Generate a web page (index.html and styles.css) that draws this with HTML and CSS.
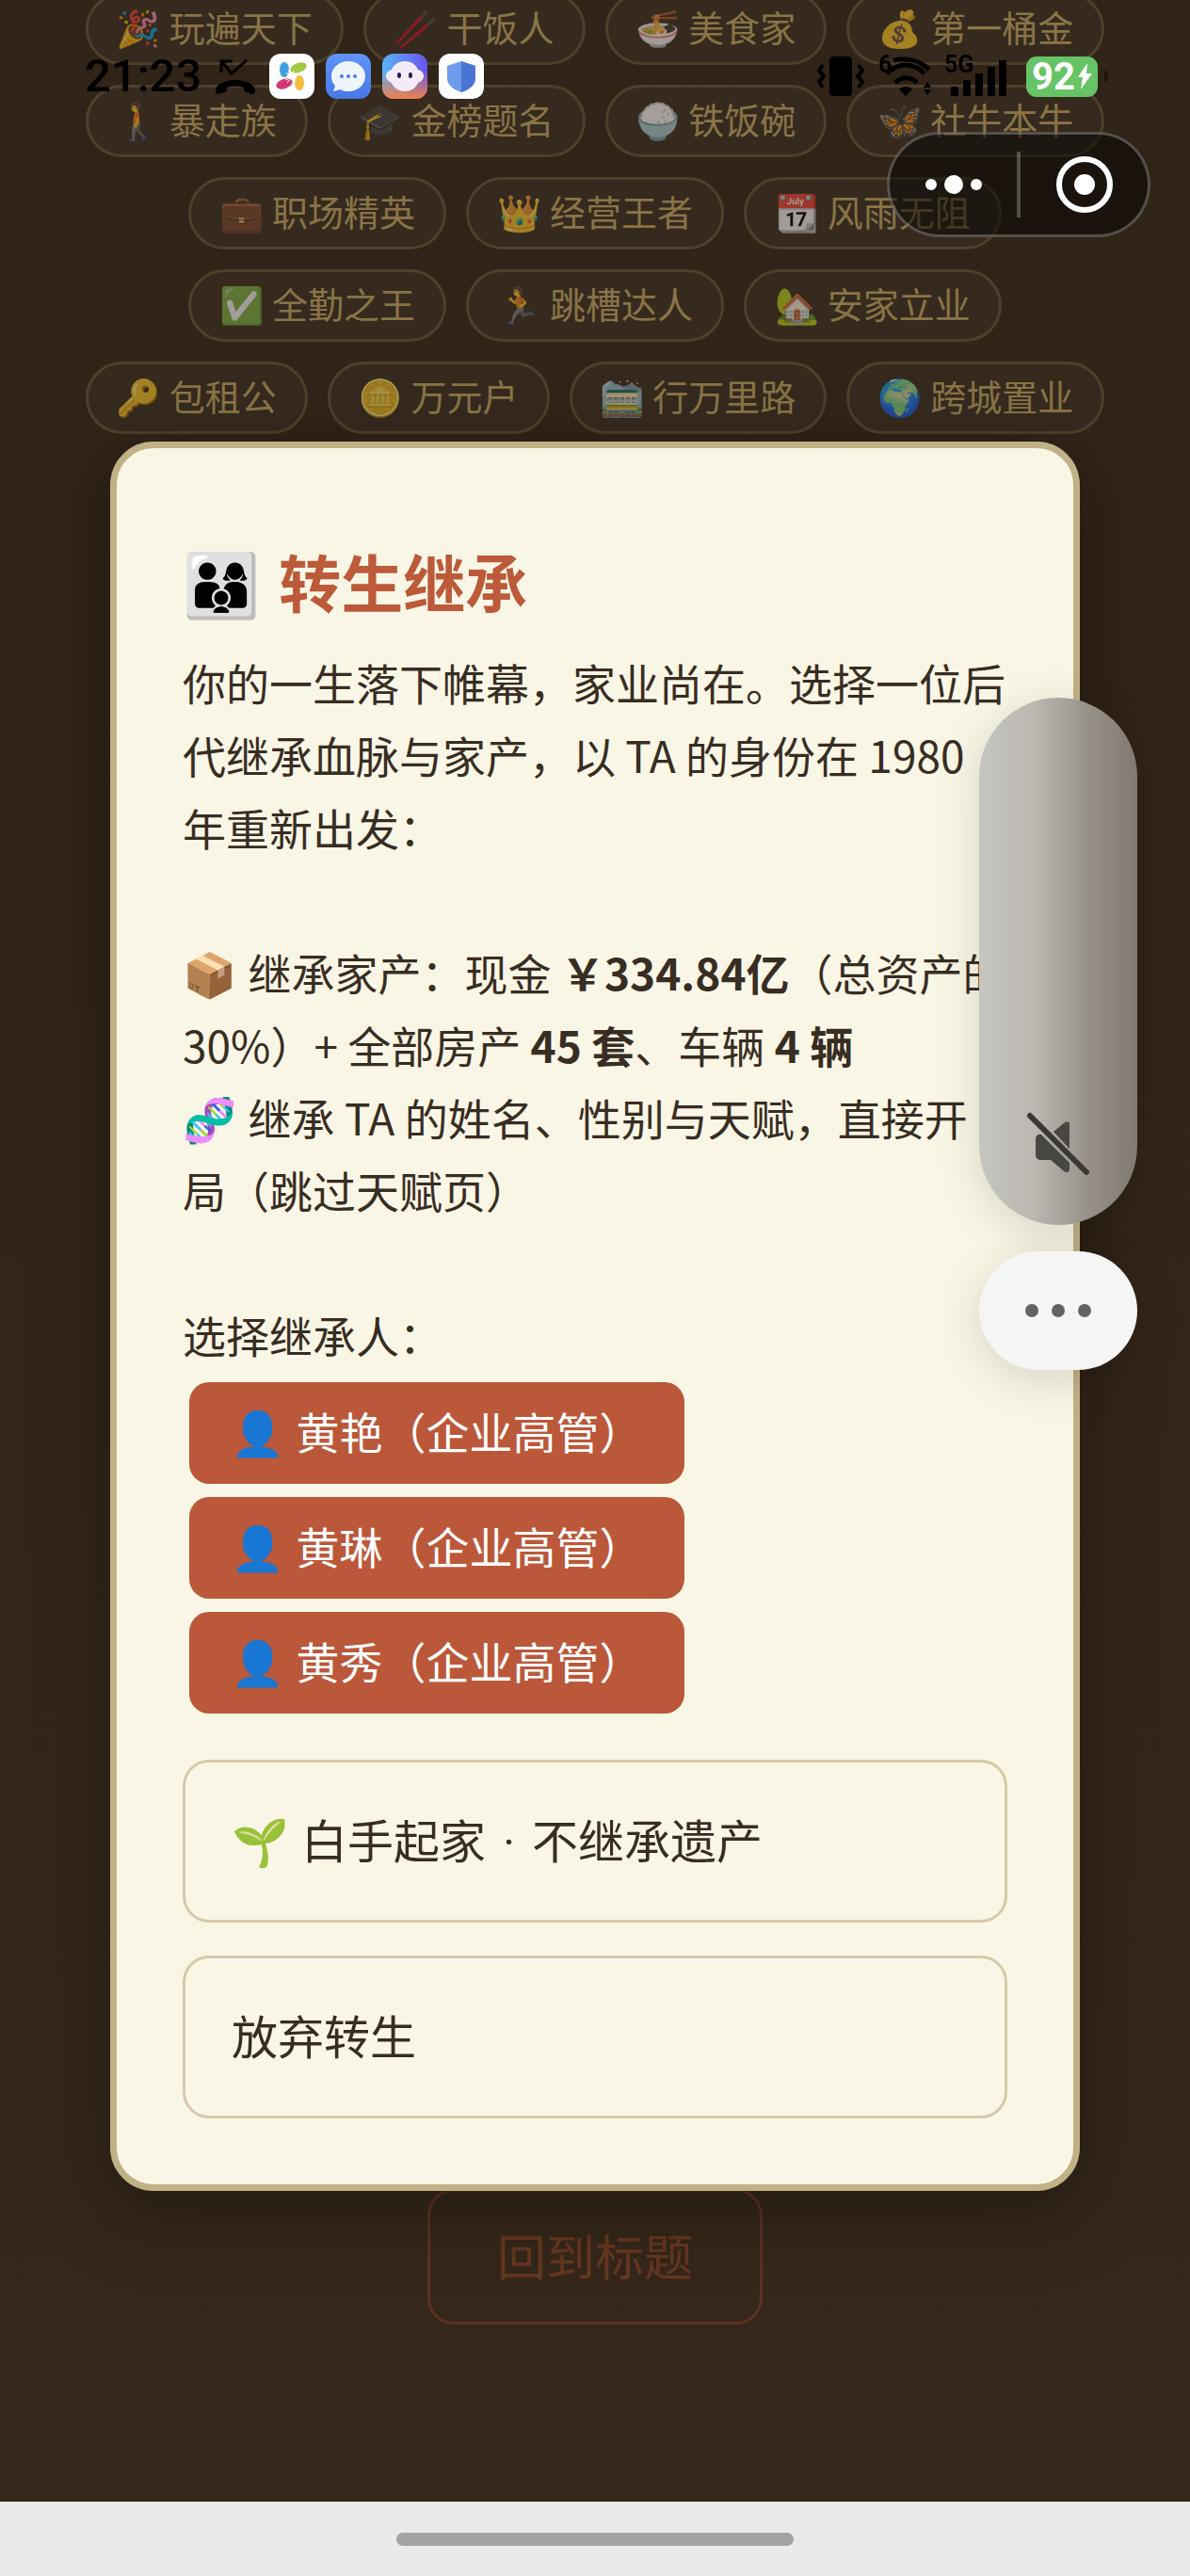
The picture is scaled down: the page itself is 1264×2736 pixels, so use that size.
FILE: index.html
```html
<!DOCTYPE html>
<html lang="zh-CN">
<head>
<meta charset="utf-8">
<meta name="viewport" content="width=device-width, initial-scale=1">
<title>转生继承</title>
<link rel="stylesheet" href="styles.css">
</head>
<body>
<div class="app">
  <main class="page">
    <ul class="badges">
      <li class="badge"><span class="emoji">🎉</span> 玩遍天下</li>
      <li class="badge"><span class="emoji">🥢</span> 干饭人</li>
      <li class="badge"><span class="emoji">🍜</span> 美食家</li>
      <li class="badge"><span class="emoji">💰</span> 第一桶金</li>
      <li class="badge"><span class="emoji">🚶</span> 暴走族</li>
      <li class="badge"><span class="emoji">🎓</span> 金榜题名</li>
      <li class="badge"><span class="emoji">🍚</span> 铁饭碗</li>
      <li class="badge"><span class="emoji">🦋</span> 社牛本牛</li>
      <li class="badge"><span class="emoji">💼</span> 职场精英</li>
      <li class="badge"><span class="emoji">👑</span> 经营王者</li>
      <li class="badge"><span class="emoji">📆</span> 风雨无阻</li>
      <li class="badge"><span class="emoji">✅</span> 全勤之王</li>
      <li class="badge"><span class="emoji">🏃</span> 跳槽达人</li>
      <li class="badge"><span class="emoji">🏡</span> 安家立业</li>
      <li class="badge"><span class="emoji">🔑</span> 包租公</li>
      <li class="badge"><span class="emoji">🪙</span> 万元户</li>
      <li class="badge"><span class="emoji">🚞</span> 行万里路</li>
      <li class="badge"><span class="emoji">🌍</span> 跨城置业</li>
    </ul>
    <button class="back" type="button">回到标题</button>
  </main>
  <footer class="navbar"><span class="navbar-handle"></span></footer>

  <div class="overlay">
    <section class="modal" role="dialog" aria-labelledby="modal-title">
      <h1 class="modal-title" id="modal-title"><span class="emoji">👨‍👩‍👦</span> 转生继承</h1>
      <p class="modal-text">你的一生落下帷幕，家业尚在。选择一位后代继承血脉与家产，以 TA 的身份在 1980 年重新出发：</p>
      <p class="modal-text"><span class="emoji">📦</span> 继承家产：现金 <strong>￥334.84亿</strong>（总资产的 30%）+ 全部房产 <strong>45 套</strong>、车辆 <strong>4 辆</strong><br><span class="emoji">🧬</span> 继承 TA 的姓名、性别与天赋，直接开局（跳过天赋页）</p>
      <p class="modal-text">选择继承人：</p>
      <div class="heirs">
        <button class="heir" type="button"><span class="emoji">👤</span> 黄艳（企业高管）</button>
        <button class="heir" type="button"><span class="emoji">👤</span> 黄琳（企业高管）</button>
        <button class="heir" type="button"><span class="emoji">👤</span> 黄秀（企业高管）</button>
      </div>
      <div class="choices">
        <button class="choice" type="button"><span class="emoji">🌱</span> 白手起家<span class="dot"> · </span>不继承遗产</button>
        <button class="choice" type="button">放弃转生</button>
      </div>
    </section>
  </div>

  <header class="status">
    <div class="status-left">
      <span class="clock">21:23</span>
      <svg class="missed" viewBox="0 0 44 38" aria-hidden="true"><path d="M7 15V3h12M8 4l10 12L34 2" fill="none" stroke="#000" stroke-width="3"/><path d="M1 34c0-6 9-11 21-11s21 5 21 11c0 3-1 4-3 4l-7-2c-2-1-2-2-2-5-5-2-13-2-18 0 0 3 0 4-2 5l-7 2c-2 0-3-1-3-4z"/></svg>
      <svg class="appicon" viewBox="0 0 48 48" aria-hidden="true"><rect width="48" height="48" rx="12" fill="#fff"/><ellipse cx="16" cy="17" rx="5" ry="8" fill="#3fa0e0"/><ellipse cx="31" cy="15" rx="9" ry="5" fill="#a0c840" transform="rotate(-20 31 15)"/><ellipse cx="16" cy="32" rx="9" ry="5" fill="#d23573" transform="rotate(-20 16 32)"/><ellipse cx="32" cy="31" rx="5" ry="8" fill="#f2bd3c"/><path d="M20 17l4 7M18 20l4 5M26 18l-2 6M29 20l-5 4M17 28l7-3M19 31l5-6M25 25l4 1M24 25l4 5" stroke="#fff" stroke-width="1"/></svg>
      <svg class="appicon" viewBox="0 0 48 48" aria-hidden="true"><defs><linearGradient id="msg" x2="0" y2="1"><stop stop-color="#6094fa"/><stop offset="1" stop-color="#4678e8"/></linearGradient></defs><rect width="48" height="48" rx="12" fill="url(#msg)"/><path d="M24 8c10 0 18 7 18 16s-8 16-18 16c-3 0-6 0-8-2l-8 2 2-6c-3-3-4-6-4-10 0-9 8-16 18-16z" fill="#eef5ff"/><circle cx="17" cy="24" r="2" fill="#4b7fe8"/><circle cx="24" cy="24" r="2" fill="#4b7fe8"/><circle cx="31" cy="24" r="2" fill="#4b7fe8"/></svg>
      <svg class="appicon" viewBox="0 0 48 48" aria-hidden="true"><defs><linearGradient id="bot" x2="1" y2="0"><stop stop-color="#5ab4f4"/><stop offset="1" stop-color="#6a54ee"/></linearGradient><linearGradient id="bot2" x2="0" y2="1"><stop offset=".4" stop-color="#f08048" stop-opacity="0"/><stop offset="1" stop-color="#f08048"/></linearGradient></defs><rect width="48" height="48" rx="12" fill="url(#bot)"/><rect width="48" height="48" rx="12" fill="url(#bot2)"/><path d="M24 8c7 0 12 4 14 9 4 1 6 4 6 7s-3 6-6 7c-2 5-7 9-14 9s-12-4-14-9c-3-1-6-4-6-7s2-6 6-7c2-5 7-9 14-9z" fill="#f5eaf8"/><ellipse cx="18" cy="23" rx="2" ry="3" fill="#241c50"/><ellipse cx="30" cy="23" rx="2" ry="3" fill="#241c50"/></svg>
      <svg class="appicon" viewBox="0 0 48 48" aria-hidden="true"><rect width="48" height="48" rx="12" fill="#fff"/><path d="M24 8l15 5v13c0 7-6 12-15 15C15 38 9 33 9 26V13z" fill="#6f9bed"/><path d="M24 8l15 5v13c0 7-6 12-15 15z" fill="#4a74d4"/></svg>
    </div>
    <div class="status-right">
      <svg class="vibrate" viewBox="0 0 54 42" aria-hidden="true"><rect x="15" width="24" height="42" rx="4"/><path d="M8 9l-4 6 5 6-5 6 4 6M46 9l4 6-5 6 5 6-4 6" fill="none" stroke="#000" stroke-width="4"/></svg>
      <span class="wifi"><span class="net-label">6</span><svg viewBox="0 0 50 42" aria-hidden="true"><g fill="none" stroke="#000" stroke-width="5"><path d="M9 4c14-3 28 0 38 10M2 18c12-12 28-12 40 0M11 28c7-7 16-7 23 0"/></g><path d="M15 35c4-4 10-4 14 0l-7 7zM41 33l4-6 4 6zM41 35l4 6 4-6z"/></svg></span>
      <span class="signal"><span class="net-label">5G</span><svg viewBox="0 0 60 42" aria-hidden="true"><rect y="32" width="8" height="10" rx="1"/><rect x="13" y="25" width="8" height="17" rx="1"/><rect x="26" y="18" width="8" height="24" rx="1"/><rect x="39" y="11" width="8" height="31" rx="1"/><rect x="51" y="4" width="8" height="38" rx="1"/></svg></span>
      <span class="battery">92<svg viewBox="0 0 15 28" aria-hidden="true"><path d="M10 0L0 15h5L3 28l12-17H9z"/></svg></span>
    </div>
  </header>

  <div class="capsule">
    <button class="capsule-btn" type="button" aria-label="更多"><svg viewBox="0 0 60 60" aria-hidden="true"><circle cx="6" cy="30" r="6"/><circle cx="30" cy="30" r="10"/><circle cx="54" cy="30" r="6"/></svg></button>
    <span class="capsule-line"></span>
    <button class="capsule-btn" type="button" aria-label="关闭"><svg viewBox="0 0 60 60" aria-hidden="true"><circle cx="30" cy="30" r="27" fill="none" stroke="#fff" stroke-width="6"/><circle cx="30" cy="30" r="11"/></svg></button>
  </div>

  <div class="volume">
    <div class="volume-track"><svg viewBox="0 0 68 68" aria-hidden="true"><g fill="#484743"><path d="M29 21l11-9c3-2 6-2 6 1v26z"/><path d="M16 24l30 30v7c0 3-3 4-6 2l-14-12H16c-4 0-6-2-6-6V29c0-3 2-6 6-5z"/></g><path d="M4 4l60 60" stroke="#393834" stroke-width="6" stroke-linecap="round"/></svg></div>
    <button class="volume-more" type="button" aria-label="更多音量设置"><i></i><i></i><i></i></button>
  </div>
</div>
</body>
</html>
```
FILE: styles.css
```css
* { box-sizing: border-box; }

body {
  margin: 0;
  font-family: "Noto Sans CJK SC", "Noto Color Emoji", sans-serif;
  color: #382d23;
  background: #302417;
}

button { font-family: inherit; cursor: pointer; }
svg { display: block; }

.app {
  position: relative;
  display: flex;
  flex-direction: column;
  min-height: 100vh;
  overflow: hidden;
}

.emoji {
  margin-right: 2px;
  font-family: "Noto Color Emoji", sans-serif;
  font-weight: 400;
  line-height: 1;
}

/* Page behind the dialog */
.page {
  flex: 1;
  display: flex;
  flex-direction: column;
  align-items: center;
  padding: 0 84px 188px;
  background: linear-gradient(#302317, #35281a);
}

.badges {
  display: flex;
  flex-wrap: wrap;
  justify-content: center;
  gap: 21px;
  margin: -8px 0 0;
  padding: 0;
  list-style: none;
}

.badge {
  height: 77px;
  padding: 0 30px;
  border: 3px solid #4e402a;
  border-radius: 39px;
  background: #362a1f;
  color: #8a7446;
  font-size: 38px;
  line-height: 66px;
  white-space: nowrap;
}

.badge .emoji { margin-right: 0; opacity: .55; }

.back {
  height: 144px;
  margin-top: auto;
  padding: 0 71px 6px;
  border: 3px solid #5c3220;
  border-radius: 28px;
  background: transparent;
  color: #663620;
  font-size: 52px;
}

.navbar {
  display: flex;
  justify-content: center;
  align-items: center;
  height: 79px;
  background: #ebeae8;
}

.navbar-handle {
  width: 33.4%;
  height: 14px;
  border-radius: 7px;
  background: #a5a4a2;
}

/* Dialog */
.overlay {
  position: absolute;
  inset: 0;
  display: flex;
  justify-content: center;
  align-items: center;
  padding: 59px 117px 0;
}

.modal {
  width: 100%;
  padding: 70px;
  border: 7px solid #c1b186;
  border-radius: 46px;
  background: #faf6e6;
  box-shadow: 0 20px 80px rgba(0, 0, 0, .35);
}

.modal-title {
  margin: 0;
  color: #bc5a3a;
  font-size: 66px;
  font-weight: 700;
  line-height: 140px;
}

.modal-title .emoji { margin-right: 5px; }

.modal-text {
  margin: 0 0 77px;
  font-size: 46px;
  line-height: 77px;
}

.modal-text:last-of-type { margin-bottom: 12px; }

.heirs {
  display: flex;
  flex-direction: column;
  align-items: flex-start;
  gap: 14px;
  padding-left: 7px;
}

.heir {
  height: 108px;
  padding: 0 44px 6px;
  border: 0;
  border-radius: 21px;
  background: #bb583a;
  color: #fff;
  font-size: 46px;
}

.choices {
  display: flex;
  flex-direction: column;
  gap: 35px;
  margin-top: 49px;
}

.choice {
  height: 173px;
  padding: 0 49px 6px;
  border: 3px solid #d5caa9;
  border-radius: 28px;
  background: transparent;
  color: #382d23;
  font-size: 49px;
  text-align: left;
}

.dot { margin: 0 6px; font-family: Roboto, sans-serif; }

/* Phone status bar */
.status {
  position: absolute;
  top: 56px;
  left: 90px;
  right: 87px;
  display: flex;
  justify-content: space-between;
  align-items: center;
  height: 50px;
  color: #000;
  font-family: Roboto, sans-serif;
}

.status-left, .status-right { display: flex; align-items: center; }
.status-left { gap: 12px; }
.status-right { gap: 20px; }

.clock { font-size: 49px; font-weight: 500; line-height: 50px; }
.missed { width: 44px; height: 38px; margin: 0 2px; }
.appicon { width: 48px; height: 48px; }
.vibrate { width: 54px; height: 42px; }

.wifi, .signal { position: relative; }
.wifi svg { width: 50px; height: 42px; }
.signal svg { width: 60px; height: 42px; }

.net-label {
  position: absolute;
  top: -4px;
  left: -7px;
  font-size: 25px;
  font-weight: 700;
  line-height: 25px;
}

.battery {
  position: relative;
  display: flex;
  align-items: center;
  justify-content: center;
  gap: 3px;
  width: 76px;
  height: 43px;
  margin-right: 11px;
  border-radius: 11px;
  background: #66c466;
  color: #fff;
  font-size: 40px;
  font-weight: 700;
}

.battery::after {
  content: "";
  position: absolute;
  right: -11px;
  width: 4px;
  height: 12px;
  border-radius: 0 4px 4px 0;
  background: #1c150e;
}

.battery svg { width: 15px; height: 28px; fill: #fff; }

/* Mini-program capsule */
.capsule {
  position: absolute;
  top: 140px;
  right: 42px;
  display: flex;
  align-items: center;
  width: 280px;
  height: 112px;
  border: 3px solid rgba(255, 255, 255, .25);
  border-radius: 56px;
  background: rgba(10, 8, 5, .55);
}

.capsule-btn {
  flex: 1;
  display: flex;
  justify-content: center;
  padding: 0;
  border: 0;
  background: none;
}

.capsule-btn svg { width: 60px; height: 60px; fill: #fff; }

.capsule-line {
  width: 4px;
  height: 70px;
  background: rgba(255, 255, 255, .25);
}

/* Volume panel */
.volume {
  position: absolute;
  top: 741px;
  right: 56px;
  display: flex;
  flex-direction: column;
  gap: 28px;
  width: 168px;
}

.volume-track {
  display: flex;
  justify-content: center;
  align-items: flex-end;
  height: 560px;
  padding-bottom: 52px;
  border-radius: 84px;
  background: linear-gradient(90deg, #c6c5bf, #bab7b0 36%, #98928a 68%, #7f7971);
  box-shadow: 0 10px 50px rgba(0, 0, 0, .14);
}

.volume-track svg { width: 68px; height: 68px; }

.volume-more {
  display: flex;
  justify-content: center;
  align-items: center;
  gap: 14px;
  height: 126px;
  padding: 0;
  border: 0;
  border-radius: 63px;
  background: #f5f5f4;
  box-shadow: 0 10px 50px rgba(0, 0, 0, .14);
}

.volume-more i {
  width: 14px;
  height: 14px;
  border-radius: 50%;
  background: #636363;
}
```
